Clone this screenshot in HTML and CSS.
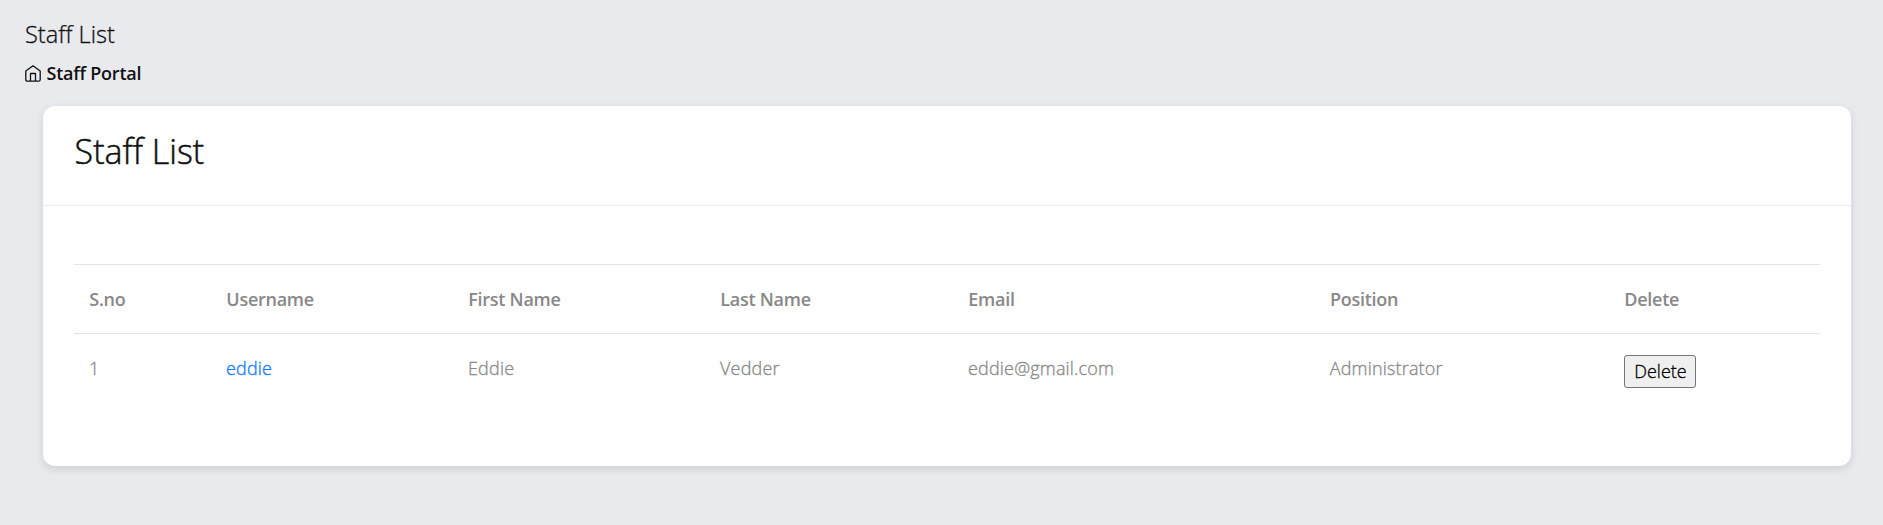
FILE: index.html
```html
<!DOCTYPE html>
<html lang="en">
<head>
<meta charset="utf-8">
<title>Staff List</title>
<link rel="stylesheet" href="styles.css">
</head>
<body>
<header class="page-header">
  <h1 class="page-title">Staff List</h1>
  <nav class="breadcrumb">
    <svg class="home-icon" viewBox="0 0 16 17" fill="none" stroke="currentColor" stroke-width="1.3" stroke-linejoin="round"><path d="M.8 6 8 .8 15.200 6V14.700Q15.200 16.200 13.700 16.200H2.300Q.8 16.200 .8 14.700Z"/><path d="M5.500 16V8.500H10.500V16"/></svg>
    <span>Staff Portal</span>
  </nav>
</header>
<main class="card">
  <div class="card-header"><h2 class="card-title">Staff List</h2></div>
  <div class="card-body">
    <table class="staff-table">
      <colgroup><col class="col-no"><col class="col-user"><col class="col-first"><col class="col-last"><col class="col-email"><col class="col-position"><col></colgroup>
      <thead><tr><th>S.no</th><th>Username</th><th>First Name</th><th>Last Name</th><th>Email</th><th>Position</th><th>Delete</th></tr></thead>
      <tbody><tr><td>1</td><td><a class="user-link" href="#">eddie</a></td><td>Eddie</td><td>Vedder</td><td>eddie@gmail.com</td><td>Administrator</td><td class="action"><button class="delete-button" type="button">Delete</button></td></tr></tbody>
    </table>
  </div>
</main>
</body>
</html>
```

FILE: styles.css
```css
* { box-sizing: border-box; }
body {
  margin: 0;
  padding: 20px 32px 0 25px;
  min-height: 525px;
  background: #e9eaee;
  color: #111;
  font: 300 18px/27px "Open Sans", sans-serif;
  -webkit-text-stroke: .3px currentColor;
}
.page-header { height: 86px; }
.page-title { margin: 0; font-size: 23.600px; font-weight: 300; line-height: 29px; }
.breadcrumb { display: flex; align-items: center; gap: 5.500px; margin-top: 11px; font-weight: 600; letter-spacing: -.23px; -webkit-text-stroke: 0; }
.home-icon { width: 16px; height: 17px; }
.card {
  height: 360px;
  margin-left: 18px;
  background: #fefefe;
  border-radius: 12px;
  box-shadow: 0 3px 8px rgba(0, 0, 0, .12);
}
.card-header { height: 100px; padding: 24px 31.600px; border-bottom: 1px solid #ededed; }
.card-title { margin: 0; font-size: 34px; font-weight: 300; line-height: 42px; -webkit-text-stroke: .5px currentColor; }
.card-body { padding: 58px 31px 0; }
.staff-table { width: 100%; table-layout: fixed; border-collapse: separate; border-spacing: 0; color: #888; }
.staff-table th, .staff-table td { height: 69px; padding: 21px 15px 0; border-top: 1px solid #e5e5e5; text-align: left; vertical-align: top; letter-spacing: .18px; }
.staff-table th { font-weight: 600; letter-spacing: -.27px; padding-left: 15.300px; -webkit-text-stroke: 0; }
.col-no { width: 137px; }
.col-user { width: 242px; }
.col-first { width: 252px; }
.col-last { width: 248px; }
.col-email { width: 361.700px; }
.col-position { width: 294.300px; }
.user-link { color: #0d78ff; text-decoration: none; }
.delete-button {
  display: block;
  width: 72px;
  height: 33px;
  padding: 1px 5px 1px 6px;
  border: 1px solid #767676;
  border-radius: 3px;
  background: #efefef;
  color: #000;
  font: inherit;
}
```
